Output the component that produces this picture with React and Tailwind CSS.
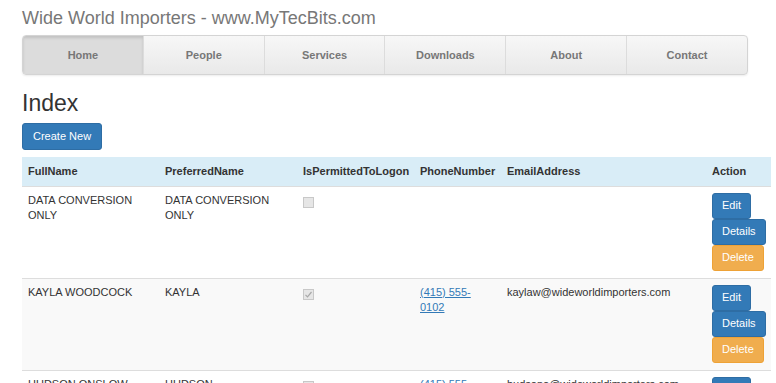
import React from 'react';

const navItems = ['Home', 'People', 'Services', 'Downloads', 'About', 'Contact'];

const rows = [
    { full: 'DATA CONVERSION ONLY', pref: 'DATA CONVERSION ONLY', permitted: false, phone: '', email: '' },
    { full: 'KAYLA WOODCOCK', pref: 'KAYLA', permitted: true, phone: '(415) 555-0102', email: 'kaylaw@wideworldimporters.com' },
    { full: 'HUDSON ONSLOW', pref: 'HUDSON', permitted: false, phone: '(415) 555-0103', email: 'hudsono@wideworldimporters.com' },
];

const Checkbox = ({ checked }) => (
    <span className="inline-flex w-[11px] h-[11px] border border-[#c8c8c8] bg-[#e6e6e6] items-center justify-center mt-[4px]">
        {checked && (
            <svg width="9" height="9" viewBox="0 0 9 9">
                <path d="M1.5 4.8 L3.5 6.8 L7.5 2" stroke="#a8a8a8" strokeWidth="1.2" fill="none" />
            </svg>
        )}
    </span>
);

const App = () => {
    return (
        <div className="bg-white h-[383px] overflow-hidden text-[11px] text-[#333] font-['Liberation_Sans',Arial,sans-serif] px-[22px] pt-[6px]">
            <h1 className="text-[18px] leading-[24px] text-[#777]">Wide World Importers - www.MyTecBits.com</h1>

            <div className="mt-[5px] w-[726px] h-[40px] flex border border-[#d4d4d4] rounded-[4px] bg-gradient-to-b from-[#f7f7f7] to-[#e9e9e9] overflow-hidden shadow-[0_1px_2px_rgba(0,0,0,0.08)]">
                {navItems.map((item, i) => (
                    <div
                        key={item}
                        className={`flex-1 flex items-center justify-center font-bold text-[#777] ${i > 0 ? 'border-l border-[#dcdcdc]' : ''} ${i === 0 ? 'bg-[#dcdcdc] shadow-[inset_0_2px_3px_rgba(0,0,0,0.12)]' : ''}`}
                    >
                        {item}
                    </div>
                ))}
            </div>

            <h2 className="text-[23px] leading-[28px] mt-[14px] text-[#333]">Index</h2>

            <button className="mt-[6px] h-[27px] px-[10px] bg-[#337ab7] border border-[#2e6da4] text-white rounded-[3px] text-[11px]">
                Create New
            </button>

            <table className="mt-[7px] w-[749px] table-fixed border-collapse">
                <colgroup>
                    <col className="w-[137px]" />
                    <col className="w-[138px]" />
                    <col className="w-[117px]" />
                    <col className="w-[87px]" />
                    <col className="w-[205px]" />
                    <col className="w-[65px]" />
                </colgroup>
                <thead>
                    <tr className="bg-[#d9edf7] h-[29px]">
                        {['FullName', 'PreferredName', 'IsPermittedToLogon', 'PhoneNumber', 'EmailAddress', 'Action'].map((h) => (
                            <th key={h} className="text-left font-bold px-[6px] align-middle whitespace-nowrap">{h}</th>
                        ))}
                    </tr>
                </thead>
                <tbody>
                    {rows.map((r, i) => (
                        <tr key={i} className={`border-t border-[#ddd] ${i % 2 === 1 ? 'bg-[#f9f9f9]' : 'bg-white'}`}>
                            <td className="px-[6px] pt-[6px] align-top leading-[15px]">{r.full}</td>
                            <td className="px-[6px] pt-[6px] align-top leading-[15px]">{r.pref}</td>
                            <td className="px-[6px] pt-[6px] align-top leading-[15px]"><Checkbox checked={r.permitted} /></td>
                            <td className="px-[6px] pt-[6px] align-top leading-[15px]">
                                {r.phone && <a className="text-[#337ab7] underline">{r.phone}</a>}
                            </td>
                            <td className="px-[6px] pt-[6px] align-top leading-[15px] whitespace-nowrap">{r.email}</td>
                            <td className="px-[6px] pt-[6px] pb-[7px] align-top">
                                <div className="flex flex-col items-start">
                                    <button className="h-[26px] px-[9px] bg-[#337ab7] border border-[#2e6da4] text-white rounded-[3px]">Edit</button>
                                    <button className="h-[26px] px-[9px] bg-[#337ab7] border border-[#2e6da4] text-white rounded-[3px]">Details</button>
                                    <button className="h-[26px] px-[9px] bg-[#f0ad4e] border border-[#eea236] text-white rounded-[3px]">Delete</button>
                                </div>
                            </td>
                        </tr>
                    ))}
                </tbody>
            </table>
        </div>
    );
};

export default App;
